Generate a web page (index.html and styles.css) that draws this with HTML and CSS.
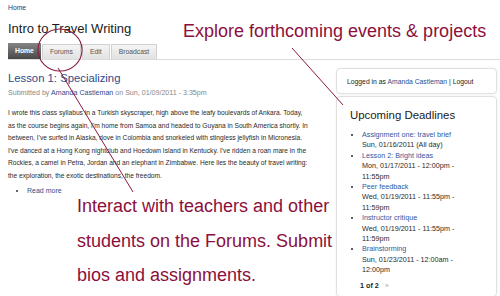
FILE: index.html
```html
<!DOCTYPE html>
<html>
<head>
<meta charset="UTF-8">
<title>Intro to Travel Writing</title>
<link rel="stylesheet" href="styles.css">
</head>
<body>

<div class="page">
  <div class="breadcrumb"><a href="#">Home</a></div>
  <h1 class="site-title">Intro to Travel Writing</h1>

  <ul class="tabs">
    <li class="active"><a href="#">Home</a></li>
    <li><a href="#">Forums</a></li>
    <li><a href="#">Edit</a></li>
    <li><a href="#">Broadcast</a></li>
  </ul>

  <div class="columns">
    <div class="main">
      <h2 class="node-title"><a href="#">Lesson 1: Specializing</a></h2>
      <div class="submitted">Submitted by <a href="#">Amanda Castleman</a> on Sun, 01/09/2011 - 3:35pm</div>
      <p class="body-text">I wrote this class syllabus in a Turkish skyscraper, high above the leafy boulevards of Ankara. Today,<br>
as the course begins again, I'm home from Samoa and headed to Guyana in South America shortly. In<br>
between, I've surfed in Alaska, dove in Colombia and snorkeled with stingless jellyfish in Micronesia.<br>
I've danced at a Hong Kong nightclub and Hoedown Island in Kentucky. I've ridden a roan mare in the<br>
Rockies, a camel in Petra, Jordan and an elephant in Zimbabwe. Here lies the beauty of travel writing:<br>
the exploration, the exotic destinations, the freedom.</p>
      <ul class="links">
        <li><a href="#">Read more</a></li>
      </ul>
    </div>

    <div class="sidebar">
      <div class="block login">Logged in as <a href="#">Amanda Castleman</a> | Logout</div>

      <div class="block deadlines">
        <h3>Upcoming Deadlines</h3>
        <ul>
          <li><a href="#">Assignment one: travel brief</a><br>Sun, 01/16/2011 (All day)</li>
          <li><a href="#">Lesson 2: Bright ideas</a><br>Mon, 01/17/2011 - 12:00pm -<br>11:55pm</li>
          <li><a href="#">Peer feedback</a><br>Wed, 01/19/2011 - 11:55pm -<br>11:59pm</li>
          <li><a href="#">Instructor critique</a><br>Wed, 01/19/2011 - 11:55pm -<br>11:59pm</li>
          <li><a href="#">Brainstorming</a><br>Sun, 01/23/2011 - 12:00am -<br>12:00pm</li>
        </ul>
        <div class="pager"><b>1 of 2</b> <span class="next">&raquo;</span></div>
      </div>
    </div>
  </div>
</div>

<!-- callouts drawn over the page -->
<svg class="callouts" width="500" height="296" viewBox="0 0 500 296">
  <ellipse cx="60" cy="50" rx="22" ry="21" fill="none" stroke="#8b1a3e" stroke-width="1.1"/>
  <line x1="58" y1="68" x2="133" y2="192" stroke="#8b1a3e" stroke-width="1"/>
  <line x1="292" y1="48" x2="343" y2="105" stroke="#8b1a3e" stroke-width="1"/>
</svg>

<p class="note note-top">Explore forthcoming events &amp; projects</p>
<p class="note note-bottom">Interact with teachers and other<br>students on the Forums. Submit<br>bios and assignments.</p>

</body>
</html>
```

FILE: styles.css
```css
body{
    margin:0;
    background:white;
    font-family:"Liberation Sans", Arial, sans-serif;
    color:#333;
    position:relative;
    width:500px;
    height:296px;
    overflow:hidden;
}

a{
    color:#2d4e8c;
    text-decoration:none;
}

.page{
    padding:0 3px 0 8px;
}

.breadcrumb{
    padding-top:4px;
    font-size:6.8px;
    line-height:8px;
}

.breadcrumb a{color:#1f3b70;}

.site-title{
    margin:9px 0 6px;
    font-size:13px;
    line-height:16px;
    font-weight:normal;
    color:#1a1a1a;
}

/* TABS */
.tabs{
    list-style:none;
    margin:0 -3px 0 0;
    padding:0;
    display:flex;
    gap:1px;
    border-bottom:1px solid #dcdcdc;
}

.tabs li a{
    display:block;
    height:14px;
    line-height:14px;
    padding:0 7px;
    font-size:6.8px;
    color:#555;
    background:linear-gradient(#f4f4f4, #e2e2e2);
    border:1px solid #d2d2d2;
    border-bottom:none;
    margin-top:1px;
}

.tabs li.active a{
    height:16px;
    line-height:16px;
    margin-top:0;
    border:none;
    color:white;
    font-weight:bold;
    background:linear-gradient(#858585, #484848);
}

/* COLUMNS */
.columns{
    display:flex;
    justify-content:space-between;
    padding-top:8px;
}

.main{flex:1;}

.node-title{
    margin:3px 0 0;
    font-size:11.3px;
    line-height:14px;
    font-weight:normal;
}

.node-title a{color:#2b4c8a;}

.submitted{
    margin-top:4px;
    font-size:7.1px;
    line-height:9px;
    color:#888;
}

.body-text{
    margin:9px 0 0;
    font-size:6.65px;
    line-height:12.5px;
    white-space:nowrap;
    color:#2a2a2a;
}

.links{
    margin:4px 0 0;
    padding-left:19px;
    font-size:7px;
    line-height:9px;
}

/* SIDEBAR */
.sidebar{width:161px;}

.block{
    border:1px solid #e0e0e0;
    border-radius:4px;
    box-shadow:0 0 2px rgba(0,0,0,0.08);
}

.login{
    padding:8px 10px 7px;
    font-size:6.8px;
    line-height:9px;
    color:#222;
    white-space:nowrap;
}

.deadlines{
    margin-top:2px;
    padding:11px 10px 5px 13px;
}

.deadlines h3{
    margin:0;
    font-size:11.4px;
    line-height:14px;
    font-weight:normal;
    color:#1a1a1a;
}

.deadlines ul{
    margin:8px 0 0;
    padding-left:12px;
    font-size:7.2px;
    line-height:10.4px;
    color:#2a2a2a;
    white-space:nowrap;
}

.deadlines ul a{color:#34589a;}

.pager{
    margin-top:5px;
    padding-left:10px;
    font-size:7.2px;
    line-height:10.5px;
    color:#222;
}

.pager .next{
    margin-left:4px;
    color:#aaa;
}

/* CALLOUTS */
.callouts{
    position:absolute;
    top:0;
    left:0;
    pointer-events:none;
}

.note{
    position:absolute;
    margin:0;
    font-family:"Liberation Sans", Arial, sans-serif;
    font-size:18px;
    color:#8b0f3c;
    white-space:nowrap;
}

.note-top{
    left:183px;
    top:21px;
    line-height:20px;
}

.note-bottom{
    left:77px;
    top:189px;
    line-height:34.5px;
}
```
